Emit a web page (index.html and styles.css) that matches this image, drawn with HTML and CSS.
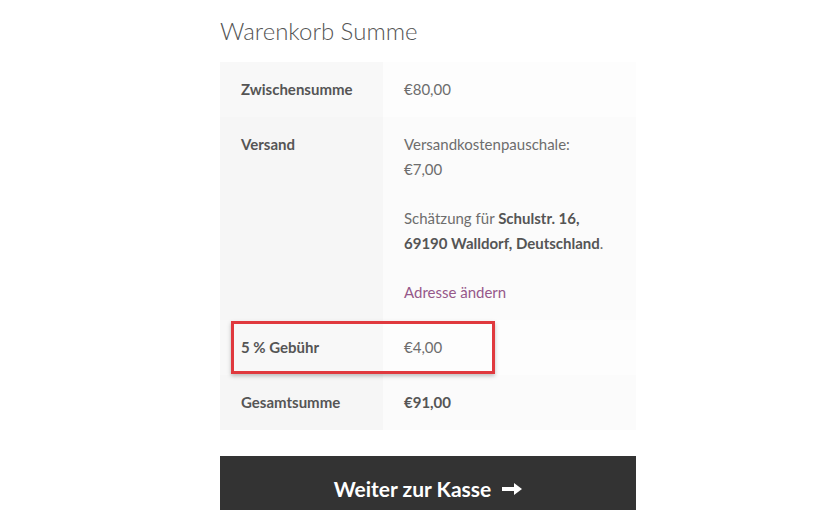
FILE: index.html
```html
<!DOCTYPE html>
<html lang="de">
<head>
<meta charset="utf-8">
<link rel="stylesheet" href="styles.css">
</head>
<body>
<div class="cart-totals">
  <h2 class="title">Warenkorb Summe</h2>
  <table class="totals">
    <tr class="row-sub">
      <th>Zwischensumme</th>
      <td>€80,00</td>
    </tr>
    <tr class="row-ship">
      <th>Versand</th>
      <td>
        <p class="method">Versandkostenpauschale:<br>€7,00</p>
        <p class="dest">Schätzung für <strong>Schulstr. 16, 69190 Walldorf, Deutschland</strong>.</p>
        <a class="change" href="#">Adresse ändern</a>
      </td>
    </tr>
    <tr class="row-fee">
      <th><span class="highlight"></span>5 % Gebühr</th>
      <td>€4,00</td>
    </tr>
    <tr class="row-total">
      <th>Gesamtsumme</th>
      <td><strong>€91,00</strong></td>
    </tr>
  </table>
  <a class="checkout" href="#">Weiter zur Kasse<svg class="arrow" width="20" height="14" viewBox="0 0 20 14"><path d="M0 5h12V1l8 6-8 6V9H0z" fill="#fff"/></svg></a>
</div>
</body>
</html>
```
FILE: styles.css
```css
html, body {
  margin: 0;
  padding: 0;
  background: #fff;
  overflow: hidden;
}
body {
  font-family: Lato, "Open Sans", sans-serif;
  color: #6d6d6d;
  font-size: 15px;
  line-height: 25px;
}
.cart-totals {
  width: 416px;
  margin-left: 220px;
}
.title {
  margin: 0;
  padding-top: 14px;
  height: 62px;
  font-size: 24px;
  font-weight: 300;
  line-height: 34px;
  color: #555;
  box-sizing: border-box;
}
.totals {
  width: 416px;
  border-collapse: collapse;
  border-spacing: 0;
}
.totals th,
.totals td {
  padding: 15px 21px;
  vertical-align: top;
  text-align: left;
  line-height: 25px;
}
.totals th {
  width: 121px;
  font-weight: 700;
  color: #555;
  background: #f8f8f8;
}
.totals td {
  background: #fdfdfd;
}
.totals .row-ship th { background: #f6f6f6; }
.totals .row-ship td { background: #fbfbfb; }
.totals .row-total th { background: #f6f6f6; }
.totals .row-total td { background: #fbfbfb; }
.method,
.dest {
  margin: 0 0 24px;
}
.dest strong,
.totals td strong {
  color: #555;
  font-weight: 700;
}
.change {
  color: #96588a;
  text-decoration: none;
}
.row-fee th {
  position: relative;
}
.highlight {
  position: absolute;
  left: 11px;
  top: 1px;
  width: 264px;
  height: 53px;
  box-sizing: border-box;
  border: 3px solid #e0393e;
  box-shadow: 0 2px 4px rgba(0,0,0,0.25);
}
.checkout {
  display: flex;
  align-items: center;
  justify-content: center;
  gap: 11px;
  margin-top: 26px;
  padding: 17px 0;
  background: #333;
  color: #fff;
  font-size: 21px;
  font-weight: 700;
  line-height: 32px;
  text-decoration: none;
}
.arrow {
  display: block;
}
```
